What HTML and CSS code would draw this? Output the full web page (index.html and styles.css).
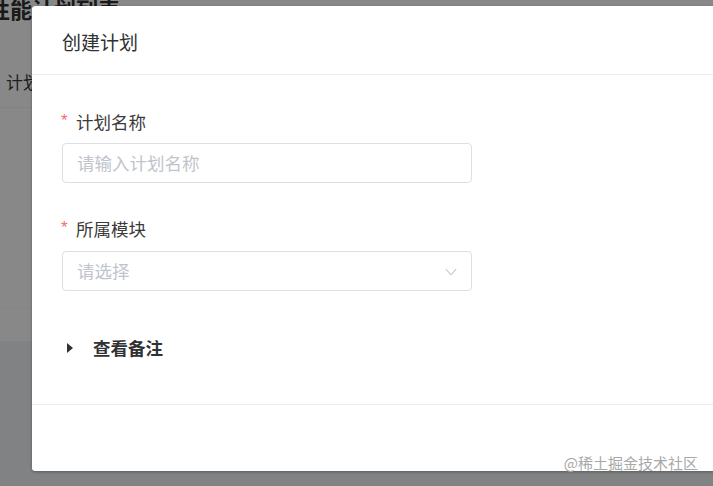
FILE: index.html
```html
<!DOCTYPE html>
<html lang="zh-CN">
<head>
<meta charset="utf-8">
<title>创建计划</title>
<link rel="stylesheet" href="styles.css">
</head>
<body>
<div class="page">
  <div class="page-top">
    <h1 class="page-title">性能计划列表</h1>
    <div class="filter-row"><span class="filter-label">计划名称</span></div>
    <div class="table-area"></div>
    <div class="pager-row"></div>
  </div>
  <div class="page-rest"></div>
</div>
<div class="overlay"></div>
<div class="dialog">
  <div class="dialog-header"><span class="dialog-title">创建计划</span></div>
  <div class="dialog-body">
    <div class="form-item">
      <label class="form-label"><span class="req">*</span>计划名称</label>
      <div class="input"><span class="placeholder">请输入计划名称</span></div>
    </div>
    <div class="form-item form-item-second">
      <label class="form-label"><span class="req">*</span>所属模块</label>
      <div class="input select"><span class="placeholder">请选择</span>
        <svg class="chevron" width="12" height="8" viewBox="0 0 12 8"><polyline points="0.8,1 6,6.8 11.2,1" fill="none" stroke="#c0c4cc" stroke-width="1.1"/></svg>
      </div>
    </div>
    <div class="collapse-row"><span class="caret"></span><span class="collapse-text">查看备注</span></div>
  </div>
  <div class="dialog-footer"></div>
</div>
<div class="watermark">@稀土掘金技术社区</div>
</body>
</html>
```
FILE: styles.css
```css
html, body {
  margin: 0;
  padding: 0;
  width: 713px;
  height: 486px;
  overflow: hidden;
  font-family: "Noto Sans CJK SC", "Noto Sans", sans-serif;
}
body { position: relative; background: #eef0f2; }

.page { display: flex; flex-direction: column; height: 486px; }
.page-top { background: #ffffff; display: flex; flex-direction: column; }
.page-title {
  margin: -4px 0 0 -12px;
  font-size: 22px;
  line-height: 24px;
  font-weight: bold;
  color: #303133;
  height: 24px;
  white-space: nowrap;
}
.filter-row {
  height: 88px;
  display: flex;
  align-items: flex-start;
  padding: 50px 0 0 6px;
  border-bottom: 1px solid #f6f6f6;
  box-sizing: border-box;
}
.filter-label { font-size: 17px; line-height: 24px; color: #3a3a3a; }
.table-area { height: 200px; border-bottom: 1px solid #f8f8f8; }
.pager-row { height: 32px; background: #ffffff; }
.page-rest { flex: 1; background: #f1f3f6; }

.overlay {
  position: absolute;
  inset: 0;
  background: rgba(0, 0, 0, 0.465);
}

.dialog {
  position: absolute;
  left: 32px;
  top: 6px;
  width: 760px;
  background: #ffffff;
  border-radius: 3px;
  box-shadow: 0 1px 3px rgba(0, 0, 0, 0.3);
}
.dialog-header {
  padding: 24px 30px 20px;
  border-bottom: 1px solid #ececec;
}
.dialog-title {
  display: block;
  font-size: 19px;
  line-height: 24px;
  color: #303133;
}
.dialog-body { padding: 35px 30px 44px; }
.form-item { display: flex; flex-direction: column; gap: 9px; }
.form-item-second { margin-top: 34px; gap: 10px; }
.form-label {
  font-size: 17.5px;
  line-height: 24px;
  color: #3a3a3a;
  display: flex;
  align-items: center;
}
.req {
  color: #f56c6c;
  font-family: "Liberation Sans", sans-serif;
  font-size: 17px;
  width: 14px;
  margin-left: -1px;
  margin-right: 1px;
  margin-top: -3px;
}
.input {
  width: 410px;
  height: 40px;
  box-sizing: border-box;
  border: 1px solid #dcdfe6;
  border-radius: 4px;
  padding: 0 14px;
  display: flex;
  align-items: center;
}
.placeholder { font-size: 17.5px; line-height: 24px; color: #c0c4cc; }
.select { justify-content: space-between; padding-right: 14px; }
.chevron { display: block; margin-top: 1px; }

.collapse-row {
  margin-top: 45px;
  display: flex;
  align-items: center;
  height: 24px;
  padding-left: 5px;
}
.caret {
  width: 0;
  height: 0;
  border-left: 6px solid #303133;
  border-top: 5px solid transparent;
  border-bottom: 5px solid transparent;
  margin-right: 20px;
}
.collapse-text {
  font-size: 17.5px;
  line-height: 24px;
  font-weight: bold;
  color: #303133;
}
.dialog-footer { height: 66px; border-top: 1px solid #ececec; }

.watermark {
  position: absolute;
  right: 15px;
  bottom: 14px;
  font-size: 15px;
  line-height: 18px;
  color: #a8a8a8;
  white-space: nowrap;
}
```
